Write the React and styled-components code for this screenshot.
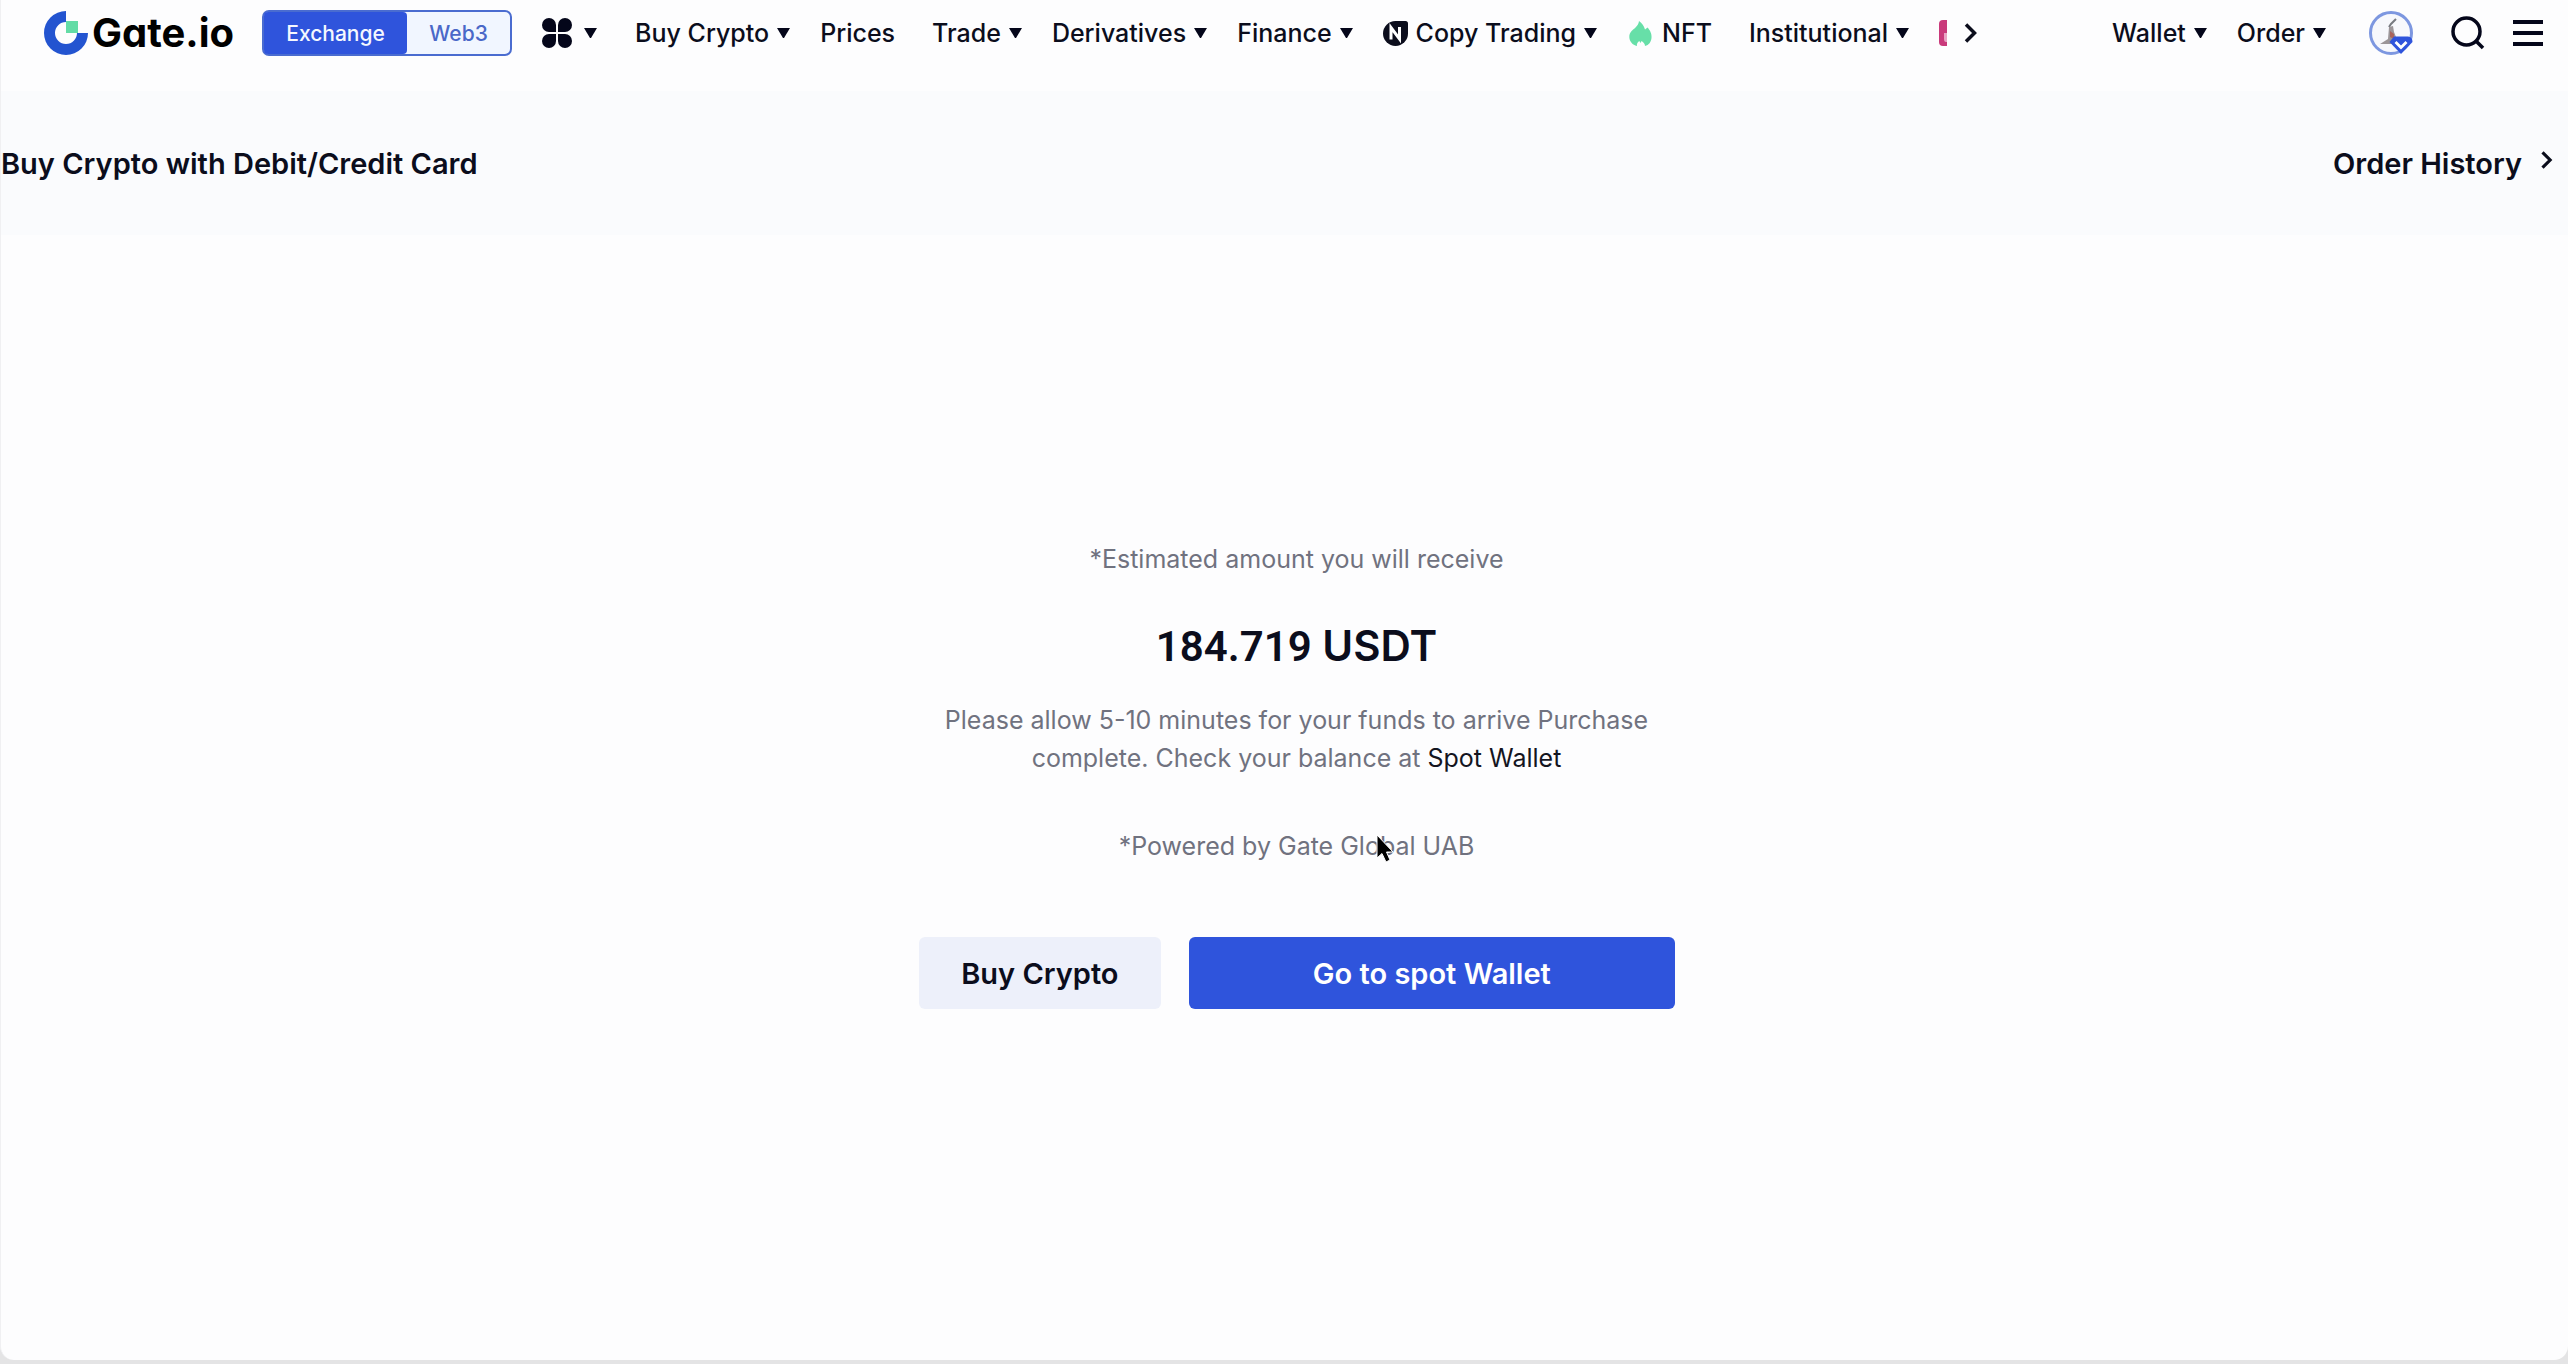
import React from 'react'
import styled, { createGlobalStyle } from 'styled-components'

const GlobalStyle = createGlobalStyle`
    * { box-sizing: border-box; }
    body {
        margin: 0;
        background: #e4e4e5;
        color: #0b0d1c;
        font-family: Inter, "Liberation Sans", sans-serif;
    }
    a { color: inherit; text-decoration: none; }
    button {
        margin: 0;
        padding: 0;
        border: none;
        background: none;
        color: inherit;
        font: inherit;
        cursor: pointer;
    }
`

const Caret = () => (
    <svg width="13" height="10" viewBox="0 0 13 10" aria-hidden="true">
        <path d="M0 0h13L7 10h-1z" fill="#04061a" />
    </svg>
)

const GateMark = () => (
    <svg width="44" height="44" viewBox="0 0 44 44" aria-hidden="true">
        <path d="M22 0A22 22 0 1 0 44 22H33A11 11 0 1 1 22 11Z" fill="#2354d0" />
        <path d="M22 10h12v12H22z" fill="#63dca6" />
    </svg>
)

const AppsIcon = () => (
    <svg width="30" height="30" viewBox="0 0 30 30" fill="#04061a" aria-hidden="true">
        <path d="M7 0a7 7 0 0 1 7 7v7H7A7 7 0 0 1 7 0z" />
        <path d="M23 0a7 7 0 0 0-7 7v7h7a7 7 0 0 0 0-14z" />
        <path d="M7 30a7 7 0 0 0 7-7v-7H7a7 7 0 0 0 0 14z" />
        <path d="M23 30a7 7 0 0 1-7-7v-7h7a7 7 0 0 1 0 14z" />
    </svg>
)

const CopyIcon = () => (
    <svg width="25" height="25" viewBox="0 0 25 25" aria-hidden="true">
        <path d="M12.500 0H22.500Q25 0 25 2.500V12.500A12.500 12.500 0 1 1 12.500 0z" fill="#0b0d1c" />
        <path d="M8 18.500V6.500L16.500 18V6" fill="none" stroke="#fff" strokeWidth="3" />
    </svg>
)

const FlameIcon = () => (
    <svg width="27" height="25" viewBox="-2 0 27 25" aria-hidden="true">
        <path d="M10 0C13 2 15 5 16 8.500L18.500 6.500C21 9 23 13 22.500 17C22 21 20 24 16 25C16 23 14.500 21 12.500 20L11.500 22L10.300 20C8.500 21 7.500 23 8 25C3.500 24 0.500 20.500 0.300 16C0.100 11 4 9 6.500 6.500C8.500 4.500 9.800 2.500 10 0z" fill="#67dfa8" />
    </svg>
)

const GiftIcon = () => (
    <svg width="26" height="26" viewBox="0 0 26 26" aria-hidden="true">
        <path d="M4 0h18a4 4 0 0 1 4 4v18a4 4 0 0 1-4 4H4a4 4 0 0 1-4-4V4a4 4 0 0 1 4-4z" fill="#c93a7b" />
        <path d="M5 13h9v9H7q-2 0-2-3z" fill="#e9a3c3" />
    </svg>
)

const Arrow = ({ size }) => (
    <svg width={size} height={size} viewBox="0 0 20 20" aria-hidden="true">
        <path d="M5 1.500L13.500 10L5 18.500" fill="none" stroke="#0b0d1c" strokeWidth="3.500" />
    </svg>
)

const AvatarIcon = () => (
    <svg width="44" height="44" viewBox="0 0 44 44" aria-hidden="true">
        <circle cx="22" cy="22" r="20.500" fill="#f7f8fc" stroke="#7d97e0" strokeWidth="3" />
        <path d="M27 8l-5 5-2 3" fill="none" stroke="#777a80" strokeWidth="2" />
        <path d="M20 16l4-1 1 6 2 5-3 7H11l8-5z" fill="#9b9598" />
        <path d="M21 20l4 3v5l-4-2z" fill="#a9635c" />
        <path d="M25 25.500H39Q43.500 26 43.500 31L32 43L20.500 31z" fill="#2f54dc" />
        <path d="M26.500 31L32 36.500L37.500 31" fill="none" stroke="#fff" strokeWidth="2.800" />
    </svg>
)

const SearchIcon = () => (
    <svg width="34" height="34" viewBox="0 0 34 34" fill="none" stroke="#04061a" strokeWidth="3.500" aria-hidden="true">
        <circle cx="15.500" cy="15.500" r="13.500" />
        <path d="M25 25L32 32" />
    </svg>
)

const MenuIcon = () => (
    <svg width="30" height="26" viewBox="0 0 30 26" fill="#04061a" aria-hidden="true">
        <path d="M0 0h30v4H0zM0 11h30v4H0zM0 22h30v4H0z" />
    </svg>
)

const Pointer = () => (
    <svg width="22" height="32" viewBox="0 0 22 32" aria-hidden="true">
        <path d="M2 1V24L7 19.500L11 28L15 26L11.500 18H18z" fill="#000" stroke="#fff" strokeWidth="1" />
    </svg>
)

const links = [
    { name: 'Buy Crypto', menu: true },
    { name: 'Prices' },
    { name: 'Trade', menu: true },
    { name: 'Derivatives', menu: true },
    { name: 'Finance', menu: true },
    { name: 'Copy Trading', menu: true, icon: <CopyIcon /> },
    { name: 'NFT', icon: <FlameIcon /> },
    { name: 'Institutional', menu: true },
]

const Header = () => (
    <HeaderWrapper>
        <Logo href="#" aria-label="Gate.io">
            <GateMark />
            <span>Gate.io</span>
        </Logo>
        <Switcher>
            <SwitchButton $active>Exchange</SwitchButton>
            <SwitchButton>Web3</SwitchButton>
        </Switcher>
        <AppsButton aria-label="Products">
            <AppsIcon />
            <Caret />
        </AppsButton>
        <Nav>
            {links.map(({ name, menu, icon }) => (
                <NavLink href="#" key={name} $plain={!menu}>
                    {icon}
                    <span>{name}</span>
                    {menu && <Caret />}
                </NavLink>
            ))}
            <CutLink href="#" aria-label="Rewards"><GiftIcon /></CutLink>
            <MoreButton aria-label="More"><Arrow size={20} /></MoreButton>
        </Nav>
        <UserNav>
            <NavLink href="#"><span>Wallet</span><Caret /></NavLink>
            <NavLink href="#"><span>Order</span><Caret /></NavLink>
        </UserNav>
        <Tools>
            <IconButton aria-label="Account"><AvatarIcon /></IconButton>
            <IconButton aria-label="Search"><SearchIcon /></IconButton>
            <IconButton aria-label="Menu"><MenuIcon /></IconButton>
        </Tools>
    </HeaderWrapper>
)

const App = () => {
    return (
        <>
            <GlobalStyle />
            <Page>
                <Header />
                <TitleBar>
                    <h1>Buy Crypto with Debit/Credit Card</h1>
                    <HistoryLink href="#">Order History <Arrow size={18} /></HistoryLink>
                </TitleBar>
                <Main>
                    <Result>
                        <Note>*Estimated amount you will receive</Note>
                        <Amount><Digits>184.719</Digits> USDT</Amount>
                        <Note>
                            <Line>Please allow 5-10 minutes for your funds to arrive Purchase</Line>
                            <Line>complete. Check your balance at <a href="#">Spot Wallet</a></Line>
                        </Note>
                        <Powered>
                            *Powered by Gate Global UAB
                            <Cursor><Pointer /></Cursor>
                        </Powered>
                        <Actions>
                            <Button>Buy Crypto</Button>
                            <Button $primary>Go to spot Wallet</Button>
                        </Actions>
                    </Result>
                </Main>
            </Page>
        </>
    )
}

const Page = styled.div`
    display: flex;
    flex-direction: column;
    min-height: calc(100vh - 4px);
    background: #fdfdfe;
    border-left: 1px solid #f0f0f2;
    border-radius: 0 0 14px 14px;
`
const HeaderWrapper = styled.header`
    display: flex;
    align-items: center;
    height: 91px;
    padding: 0 25px 25px 43px;
    white-space: nowrap;
`
const Logo = styled.a`
    display: flex;
    align-items: center;
    gap: 4px;
    color: #000;
    font-size: 40px;
    font-weight: 700;
    line-height: 44px;
    font-feature-settings: "cv11";
`
const Switcher = styled.div`
    display: flex;
    width: 250px;
    height: 46px;
    margin-left: 28px;
    background: #f1f6ff;
    border: 2px solid #4a6cd0;
    border-radius: 7px;
`
const SwitchButton = styled.button`
    flex: ${({ $active }) => ($active ? '0 0 143px' : '1')};
    background: ${({ $active }) => ($active ? '#2f54dc' : 'transparent')};
    border-radius: 4px;
    color: ${({ $active }) => ($active ? '#f5f8ff' : '#4a68c8')};
    font-size: 21px;
    font-weight: 500;
`
const AppsButton = styled.button`
    display: flex;
    align-items: center;
    gap: 12px;
    margin-left: 30px;
`
const Nav = styled.nav`
    display: flex;
    align-items: center;
    gap: 30px;
    margin-left: 38px;
`
const NavLink = styled.a`
    display: flex;
    align-items: center;
    gap: 8px;
    padding-right: ${({ $plain }) => ($plain ? '7px' : '0')};
    font-size: 25px;
    font-weight: 500;
    line-height: 32px;
`
const CutLink = styled.a`
    display: flex;
    width: 8px;
    overflow: hidden;

    svg { flex-shrink: 0; }
`
const MoreButton = styled.button`
    display: flex;
    margin-left: -16px;
`
const UserNav = styled.nav`
    display: flex;
    gap: 30px;
    margin-left: auto;
`
const Tools = styled.div`
    display: flex;
    align-items: center;
    gap: 28px;
    margin-left: 43px;

    button:first-child { margin-right: 10px; }
`
const IconButton = styled.button`
    display: flex;
`
const TitleBar = styled.section`
    display: flex;
    align-items: center;
    justify-content: space-between;
    height: 144px;
    padding-right: 12px;
    background: #fafbfd;
    font-size: 29px;
    font-weight: 600;

    h1 { margin: 0; font: inherit; }
`
const HistoryLink = styled.a`
    display: flex;
    align-items: center;
    gap: 16px;

    svg { margin-bottom: 6px; }
`
const Main = styled.main`
    flex: 1;
    padding: 305px 0 0 24px;
`
const Result = styled.section`
    display: flex;
    flex-direction: column;
    width: 756px;
    max-width: 100%;
    margin: 0 auto;
    text-align: center;
`
const Note = styled.p`
    margin: 0;
    padding: 0 20px;
    color: #70727f;
    font-size: 25px;
    line-height: 38px;

    a { color: #14151f; }
`
const Line = styled.span`
    display: block;
`
const Amount = styled.strong`
    margin: 42px 0 28px;
    font-size: 42px;
    font-weight: 600;
    line-height: 52px;
`
const Digits = styled.span`
    font-family: Roboto, Inter, sans-serif;
`
const Powered = styled(Note)`
    position: relative;
    margin-top: 50px;
`
const Cursor = styled.span`
    position: absolute;
    top: 7px;
    left: 456px;
`
const Actions = styled.div`
    display: flex;
    gap: 28px;
    margin-top: 72px;
`
const Button = styled.button`
    flex: ${({ $primary }) => ($primary ? '2' : '1')};
    height: 72px;
    background: ${({ $primary }) => ($primary ? '#2f54dc' : '#edf0fa')};
    border-radius: 6px;
    color: ${({ $primary }) => ($primary ? '#fff' : '#0b0d1c')};
    font-size: 29px;
    font-weight: 600;
`

export default App
